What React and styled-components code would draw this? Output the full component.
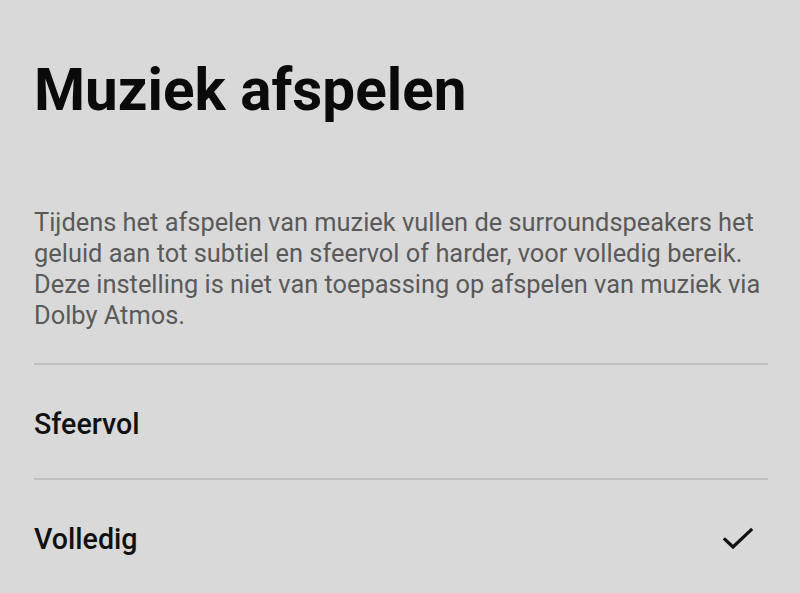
import React from "react";
import styled, { createGlobalStyle } from "styled-components";

const GlobalStyle = createGlobalStyle`
  html, body {
    margin: 0;
    padding: 0;
    background: #d9d9d9;
  }
  body {
    font-family: Roboto, "Noto Sans", sans-serif;
  }
`;

const Page = styled.div`
  width: 800px;
  height: 593px;
  overflow: hidden;
  box-sizing: border-box;
  padding: 0 32px 0 34px;
  background: #d9d9d9;
`;

const Title = styled.h1`
  margin: 0;
  padding-top: 52px;
  font-size: 58.4px;
  line-height: 76px;
  font-weight: 700;
  color: #0a0a0a;
`;

const Description = styled.p`
  margin: 0;
  padding: 79px 0 32px;
  font-size: 25.4px;
  line-height: 31px;
  color: #5a5a5a;
`;

const OptionList = styled.ul`
  list-style: none;
  margin: 0;
  padding: 0;
`;

const Option = styled.li`
  display: flex;
  align-items: center;
  justify-content: space-between;
  height: 115px;
  padding: 4px 14px 0 0;
  box-sizing: border-box;
  border-top: 2px solid #c0c0c0;
  font-size: 28.6px;
  font-weight: 500;
  color: #111;
`;

const Check = () => (
  <svg width="32" height="24" viewBox="0 0 32 24" fill="none">
    <path
      d="M3 12.5 L11 20 L29 3"
      stroke="#111"
      strokeWidth="3.2"
      strokeLinecap="square"
    />
  </svg>
);

const options = [
  { label: "Sfeervol", selected: false },
  { label: "Volledig", selected: true },
];

export default function App() {
  return (
    <>
      <GlobalStyle />
      <Page>
        <Title>Muziek afspelen</Title>
        <Description>
          Tijdens het afspelen van muziek vullen de surroundspeakers het geluid
          aan tot subtiel en sfeervol of harder, voor volledig bereik. Deze
          instelling is niet van toepassing op afspelen van muziek via Dolby
          Atmos.
        </Description>
        <OptionList>
          {options.map((o) => (
            <Option key={o.label}>
              <span>{o.label}</span>
              {o.selected && <Check />}
            </Option>
          ))}
        </OptionList>
      </Page>
    </>
  );
}
